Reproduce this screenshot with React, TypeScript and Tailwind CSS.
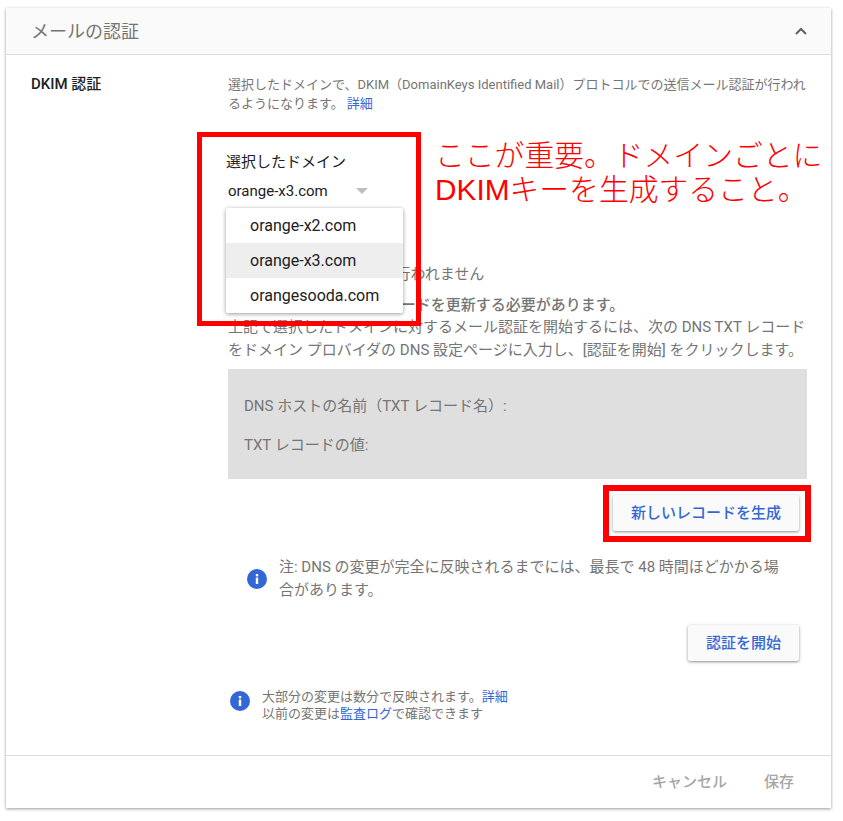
const font = "font-['Roboto','Noto_Sans_CJK_JP',sans-serif]";

function InfoIcon({ className }: { className: string }) {
  return (
    <svg className={className} viewBox="0 0 20 20" aria-hidden="true">
      <circle cx="10" cy="10" r="10" fill="#3367d6" />
      <rect x="8.8" y="8.6" width="2.4" height="6.4" fill="#fff" />
      <rect x="8.8" y="5" width="2.4" height="2.4" fill="#fff" />
    </svg>
  );
}

function RaisedButton({ children }: { children: string }) {
  return (
    <button className="flex h-[36px] items-center rounded-[2px] bg-[#fafafa] px-[18px] text-[15px] font-medium text-[#3367d6] shadow-[0_1px_3px_rgba(0,0,0,0.45)]">
      {children}
    </button>
  );
}

function DomainMenu() {
  const domains = ["orange-x2.com", "orange-x3.com", "orangesooda.com"];
  return (
    <div className="absolute left-[226px] top-[208px] w-[177px] rounded-[2px] bg-white shadow-[0_1px_4px_rgba(0,0,0,0.4)]">
      {domains.map((domain) => (
        <div
          key={domain}
          className={`flex h-[35px] items-center pl-[24px] text-[16px] text-[#212121] ${
            domain === "orange-x3.com" ? "bg-[#eeeeee]" : ""
          }`}
        >
          {domain}
        </div>
      ))}
    </div>
  );
}

export default function App() {
  return (
    <div className={`${font} relative h-[821px] w-[843px] overflow-hidden bg-white pl-[6px] pt-[8px]`}>
      <div className="flex h-[800px] w-[825px] flex-col bg-white shadow-[0_1px_3px_rgba(0,0,0,0.4)]">
        <header className="flex h-[47px] items-center justify-between border-b border-[#dddddd] bg-[#fafafa] pl-[25px] pr-[23px]">
          <h1 className="text-[18px] text-[#757575]">メールの認証</h1>
          <svg className="h-[14px] w-[14px]" viewBox="0 0 14 14" fill="none" stroke="#616161" strokeWidth="2" aria-hidden="true">
            <path d="M2 10l5-5 5 5" />
          </svg>
        </header>

        <div className="flex flex-1">
          <div className="w-[222px] pl-[25px] pt-[19px] text-[15px] font-medium leading-[20px] text-[#212121]">
            DKIM 認証
          </div>

          <div className="w-[579px] pt-[20px]">
            <p className="text-[13px] leading-[19px] text-[#757575]">
              選択したドメインで、DKIM（DomainKeys Identified Mail）プロトコルでの送信メール認証が行われるようになります。
              <a className="ml-[3px] text-[#3367d6]">詳細</a>
            </p>

            <div className="mt-[39px] h-[60px]">
              <div className="-ml-[2px] text-[15px] leading-[20px] text-[#212121]">選択したドメイン</div>
              <div className="mt-[9px] flex w-[140px] items-center justify-between text-[15px] leading-[20px] text-[#212121]">
                orange-x3.com
                <span className="h-0 w-0 border-x-[6px] border-t-[6px] border-x-transparent border-t-[#bdbdbd]" />
              </div>
            </div>

            <p className="mt-[52px] text-[15px] leading-[20px] text-[#757575]">ステータス: DKIM 認証は行われません</p>
            <p className="mt-[11px] text-[15px] font-medium leading-[20px] text-[#757575]">ご利用中の DNS TXT レコードを更新する必要があります。</p>
            <p className="mt-[1px] text-[15px] leading-[23px] text-[#757575]">
              上記で選択したドメインに対するメール認証を開始するには、次の DNS TXT レコードをドメイン プロバイダの DNS 設定ページに入力し、[認証を開始] をクリックします。
            </p>

            <div className="mt-[7px] flex h-[110px] flex-col justify-center gap-[19px] bg-[#dfdfdf] pl-[16px] pt-[2px] text-[15px] leading-[20px] text-[#757575]">
              <div>DNS ホストの名前（TXT レコード名）:</div>
              <div>TXT レコードの値:</div>
            </div>

            <div className="mt-[16px] flex justify-end pr-[8px]">
              <RaisedButton>新しいレコードを生成</RaisedButton>
            </div>

            <div className="mt-[25px] flex items-center gap-[12px] pl-[19px]">
              <InfoIcon className="h-[20px] w-[20px] shrink-0" />
              <p className="w-[507px] text-[15px] leading-[23px] text-[#757575]">
                注: DNS の変更が完全に反映されるまでには、最長で 48 時間ほどかかる場合があります。
              </p>
            </div>

            <div className="mt-[23px] flex justify-end pr-[8px]">
              <RaisedButton>認証を開始</RaisedButton>
            </div>

            <div className="mt-[27px] flex items-start gap-[12px] pl-[2px]">
              <InfoIcon className="mt-[3px] h-[20px] w-[20px] shrink-0" />
              <p className="text-[13px] leading-[17px] text-[#757575]">
                大部分の変更は数分で反映されます。<a className="text-[#3367d6]">詳細</a>
                <br />
                以前の変更は<a className="text-[#3367d6]">監査ログ</a>で確認できます
              </p>
            </div>
          </div>
        </div>

        <footer className="flex h-[53px] items-center justify-end gap-[37px] border-t border-[#dddddd] pr-[37px] text-[15px] font-medium text-[#a6a6a6]">
          <span>キャンセル</span>
          <span>保存</span>
        </footer>
      </div>

      <DomainMenu />

      {/* annotations pasted over the screenshot */}
      <div className="absolute left-[197px] top-[132px] h-[194px] w-[224px] border-[5px] border-[#ff0000]" />
      <div className="absolute left-[603px] top-[485px] h-[57px] w-[208px] border-[6px] border-[#ff0000]" />
      <div className="absolute left-[435px] top-[139px] w-[400px] text-[29.8px] font-light leading-[34px] text-[#ff0000] font-['Liberation_Sans','Noto_Sans_CJK_JP',sans-serif]">
        ここが重要。ドメインごとに
        <br />
        DKIMキーを生成すること。
      </div>
    </div>
  );
}
